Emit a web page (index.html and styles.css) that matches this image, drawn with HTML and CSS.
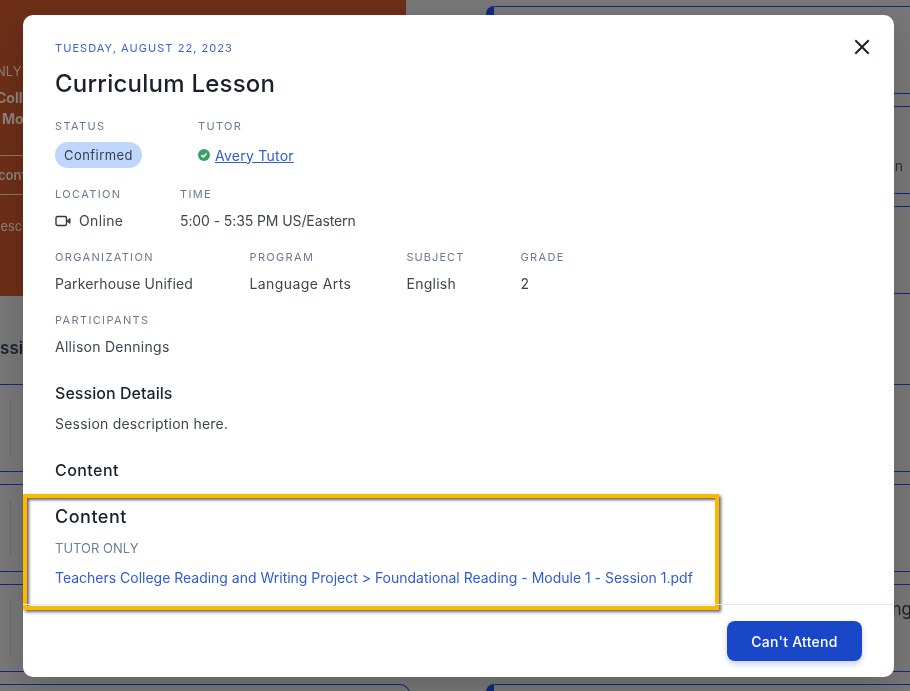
FILE: index.html
```html
<!DOCTYPE html>
<html lang="en">
<head>
<meta charset="utf-8">
<title>Curriculum Lesson</title>
<link rel="stylesheet" href="styles.css">
</head>
<body>
<div class="page">
  <div class="col-left">
    <div class="hero">
      <p class="hero-only">TUTOR ONLY</p>
      <p class="hero-link"><span class="hero-l1">Teachers College</span><span class="hero-l2">Module 1</span></p>
      <p class="hero-row">Reconfirm</p>
      <p class="hero-desc">Description</p>
    </div>
    <h2 class="sessions-title">Sessions</h2>
    <div class="bg-card-left"><span class="bg-rule"></span></div>
    <div class="bg-card-left"><span class="bg-rule"></span></div>
    <div class="bg-card-left"><span class="bg-rule"></span></div>
    <div class="bg-card-left"></div>
  </div>
  <div class="col-right">
    <div class="bg-card first"><span class="bg-side"></span><span class="bg-text blue">in</span></div>
    <div class="bg-card"><span class="bg-text">Session</span></div>
    <div class="bg-card gap-after"></div>
    <div class="bg-card"></div>
    <div class="bg-card"></div>
    <div class="bg-card"><span class="bg-text lower">Reading</span></div>
    <div class="bg-card last"><span class="bg-side"></span></div>
  </div>
</div>
<div class="backdrop">
  <section class="modal">
    <button class="close" aria-label="Close">
      <svg viewBox="0 0 16 16" width="16" height="16"><path d="M2 2l12 12M14 2L2 14" stroke="#1a202c" stroke-width="2" fill="none" stroke-linecap="square"/></svg>
    </button>
    <div class="modal-body">
      <p class="date">TUESDAY, AUGUST 22, 2023</p>
      <h1 class="title">Curriculum Lesson</h1>
      <div class="row row-status">
        <div class="field f-status">
          <p class="label">STATUS</p>
          <span class="pill">Confirmed</span>
        </div>
        <div class="field">
          <p class="label">TUTOR</p>
          <div class="tutor">
            <svg viewBox="0 0 12 12" width="12" height="12"><circle cx="6" cy="6" r="6" fill="#38a169"/><path d="M3.4 6.2l1.8 1.7 3.4-3.5" stroke="#fff" stroke-width="1.5" fill="none"/></svg>
            <a class="tutor-link" href="#">Avery Tutor</a>
          </div>
        </div>
      </div>
      <div class="row row-loc">
        <div class="field f-loc">
          <p class="label">LOCATION</p>
          <div class="value online">
            <svg viewBox="0 0 16 12" width="16" height="12"><rect x="1" y="1.5" width="10.5" height="9" rx="1.5" fill="none" stroke="#2d3748" stroke-width="1.4"/><path d="M12.4 6l2.4-2v4z" fill="none" stroke="#2d3748" stroke-width="1.4" stroke-linejoin="round"/></svg>
            <span>Online</span>
          </div>
        </div>
        <div class="field">
          <p class="label">TIME</p>
          <p class="value v-time">5:00 - 5:35 PM US/Eastern</p>
        </div>
      </div>
      <div class="row row-org">
        <div class="field f-org"><p class="label">ORGANIZATION</p><p class="value v-org">Parkerhouse Unified</p></div>
        <div class="field f-prog"><p class="label">PROGRAM</p><p class="value v-prog">Language Arts</p></div>
        <div class="field f-subj"><p class="label label-subj">SUBJECT</p><p class="value v-subj">English</p></div>
        <div class="field"><p class="label">GRADE</p><p class="value">2</p></div>
      </div>
      <div class="field f-part"><p class="label">PARTICIPANTS</p><p class="value v-part">Allison Dennings</p></div>
      <h3 class="heading h-details">Session Details</h3>
      <p class="value v-desc">Session description here.</p>
      <h3 class="heading h-content">Content</h3>
      <div class="highlight">
        <h3 class="hl-title">Content</h3>
        <p class="hl-only">TUTOR ONLY</p>
        <a class="hl-link" href="#">Teachers College Reading and Writing Project &gt; Foundational Reading - Module 1 - Session 1.pdf</a>
      </div>
    </div>
    <footer class="modal-foot">
      <button class="cta">Can't Attend</button>
    </footer>
  </section>
</div>
</body>
</html>
```
FILE: styles.css
```css
* { box-sizing: border-box; }
html, body { margin: 0; height: 100%; overflow: hidden; }
body { font-family: Inter, "Liberation Sans", sans-serif; background: #737373; }
p, h1, h2, h3 { margin: 0; }

/* dimmed page behind the dialog */
.page { display: flex; width: 910px; height: 691px; overflow: hidden; background: #777; filter: blur(.5px); }
.col-left { width: 410px; flex: none; }
.hero { height: 296px; width: 406px; background: #6c2e17; color: #8a8078; padding: 63px 0 0 0; font-size: 13px; overflow: hidden; }
.hero-only { height: 24px; margin-left: -62px; white-space: nowrap; }
.hero-link { height: 68px; font-weight: 700; line-height: 21px; font-size: 14px; white-space: nowrap; }
.hero-l1 { display: block; margin-left: -71px; }
.hero-l2 { display: block; margin-left: 2px; }
.hero-row { border-top: 1px solid #8a7468; border-bottom: 1px solid #8a7468; height: 40px; line-height: 38px; font-weight: 600; text-indent: -18px; }
.hero-desc { margin: 23px 0 0 -9px; }
.sessions-title { margin: 41px 0 0 -21px; font-size: 17px; font-weight: 600; color: #1c2430; height: 47px; line-height: 22px; }
.bg-card-left { height: 88px; margin-bottom: 12px; border-top: 1px solid #12297c; border-bottom: 1px solid #12297c; padding-top: 15px; }
.bg-card-left:last-child { border-bottom: 0; border-radius: 0 10px 0 0; border-right: 1px solid #12297c; }
.bg-rule { display: block; width: 1px; height: 55px; margin-left: 10px; background: #6a6a6a; }
.col-right { width: 424px; margin-left: 76px; flex: none; padding-top: 6px; }
.bg-card { position: relative; height: 88px; margin-bottom: 12px; border-top: 1px solid #12297c; border-bottom: 1px solid #12297c; }
.bg-card.gap-after { margin-bottom: 90px; }
.bg-card.first { border-radius: 10px 0 0 0; }
.bg-card.last { border-bottom: 0; border-radius: 10px 0 0 0; }
.bg-side { position: absolute; left: 0; top: -1px; width: 8px; height: 88px; background: #12297c; border-radius: 8px 0 0 0; }
.bg-text { position: absolute; right: 7px; top: 50px; font-size: 14px; color: #2a3038; }
.bg-text.blue { color: #2b4a8a; top: 52px; right: 15px; }
.bg-text.lower { font-size: 17px; top: 14px; right: -2px; color: #1c1f24; }

/* dialog */
.backdrop { position: fixed; inset: 0; }
.modal { position: absolute; left: 23px; top: 15px; width: 871px; height: 662px; background: #fff; border-radius: 10px; box-shadow: 0 10px 30px rgba(0,0,0,.16); display: flex; flex-direction: column; }
.close { position: absolute; left: 831px; top: 24px; width: 16px; height: 16px; padding: 0; border: 0; background: none; display: flex; }
.modal-body { flex: 1; min-height: 0; padding: 26px 0 0 32px; }
.date { font-size: 11px; line-height: 14px; letter-spacing: 1.05px; color: #3a62d8; }
.title { font-size: 24px; line-height: 32px; font-weight: 500; color: #1a202c; margin-top: 13px; letter-spacing: .24px; }
.row { display: flex; }
.row-status { margin-top: 18px; }
.row-loc { margin-top: 18px; }
.row-org { margin-top: 18px; }
.f-status { width: 143px; }
.f-loc { width: 125px; }
.f-org { width: 194.5px; }
.f-prog { width: 157px; }
.f-subj { width: 114px; }
.f-part { margin-top: 18px; }
.label { font-size: 11px; line-height: 16px; letter-spacing: 1.35px; color: #6b7a90; }
.label-subj { letter-spacing: 1.05px; }
.value { font-size: 14px; line-height: 20px; color: #3f4650; margin-top: 9px; }
.pill { display: block; margin-top: 8px; width: 87px; height: 26px; line-height: 26px; text-align: center; border-radius: 13px; background: #bfd7fb; font-size: 13px; color: #364152; letter-spacing: .45px; }
.tutor { display: flex; align-items: center; gap: 5px; height: 26px; margin-top: 8px; }
.tutor-link { color: #2f5bd6; font-size: 14px; letter-spacing: .24px; }
.online { display: flex; align-items: center; gap: 8px; letter-spacing: .35px; }
.v-time { letter-spacing: -.1px; }
.v-org { letter-spacing: .15px; }
.v-prog { letter-spacing: .42px; }
.v-subj { letter-spacing: .25px; }
.v-part { letter-spacing: .27px; }
.heading { font-size: 16px; line-height: 22px; font-weight: 550; color: #1a202c; }
.h-details { margin-top: 25px; letter-spacing: .05px; }
.v-desc { margin-top: 10px; letter-spacing: .22px; }
.h-content { margin-top: 25px; letter-spacing: .45px; }
.highlight { width: 696px; height: 116px; margin: 13px 0 0 -32px; padding: 7px 0 0 28px; border: 4px solid #fdb900; box-shadow: 2px 2px 3px rgba(0,0,0,.6), inset 2px 2px 3px rgba(0,0,0,.6); }
.hl-title { font-size: 18px; line-height: 24px; font-weight: 550; color: #1a202c; letter-spacing: .5px; }
.hl-only { font-size: 13px; line-height: 20px; color: #718096; margin-top: 9px; }
.hl-link { display: block; margin-top: 10px; font-size: 14px; line-height: 20px; letter-spacing: -.01px; color: #2f5bd6; white-space: nowrap; text-decoration: none; }
.modal-foot { height: 73px; flex: none; border-top: 1px solid #e2e8f0; padding: 16px 32px 0 0; display: flex; justify-content: flex-end; }
.cta { width: 135px; height: 40px; border: 0; border-radius: 8px; background: #1a47c8; color: #fff; font: 550 14px Inter, "Liberation Sans", sans-serif; letter-spacing: .25px; box-shadow: 0 3px 6px rgba(26,71,200,.25); }
```
